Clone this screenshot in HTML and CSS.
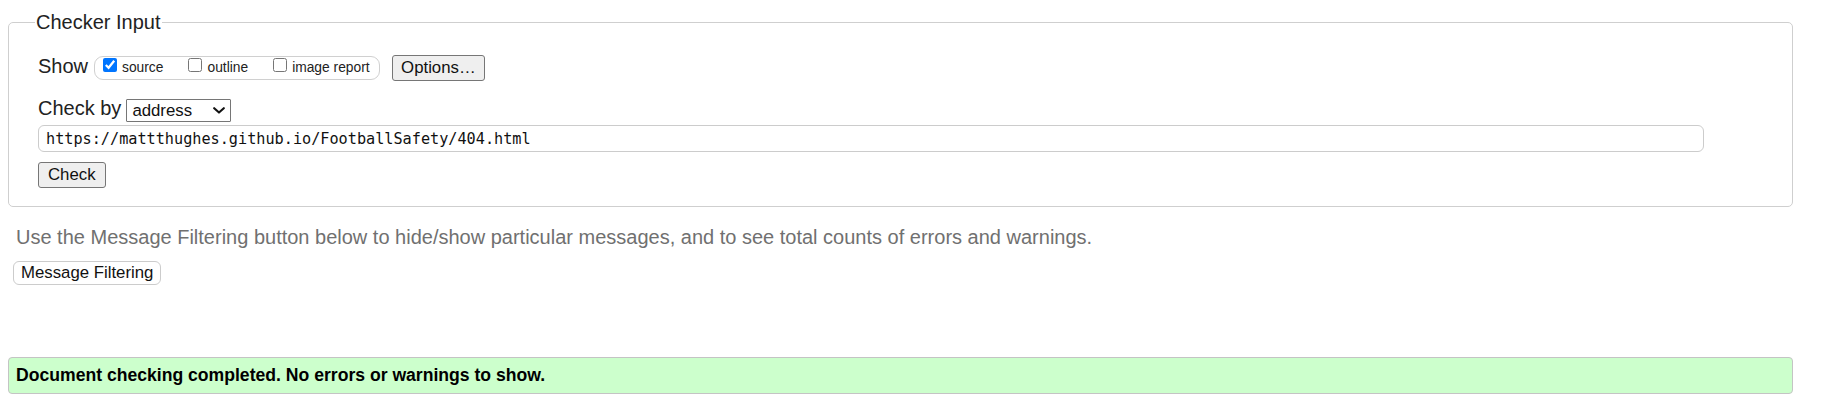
FILE: index.html
```html
<!DOCTYPE html>
<html lang="en">
<head>
<meta charset="utf-8">
<title>Nu Html Checker</title>
<link rel="stylesheet" href="styles.css">
</head>
<body>
<form class="page">
  <fieldset class="checker">
    <legend class="checker-legend">Checker Input</legend>
    <div class="show-row">
      <span class="row-label show-label">Show</span>
      <div class="options-group">
        <label class="opt"><input type="checkbox" class="cb" checked><span class="opt-text">source</span></label>
        <label class="opt"><input type="checkbox" class="cb"><span class="opt-text">outline</span></label>
        <label class="opt"><input type="checkbox" class="cb"><span class="opt-text">image report</span></label>
      </div>
      <button type="button" class="btn btn-options">Options…</button>
    </div>
    <div class="checkby-row">
      <span class="row-label checkby-label">Check by</span>
      <span class="select-wrap">
        <select class="select">
          <option>address</option>
        </select>
        <svg class="chevron" width="12" height="7" viewBox="0 0 12 7" aria-hidden="true"><path d="M1.2 1.2 L6 5.6 L10.8 1.2" fill="none" stroke="#111" stroke-width="2.1" stroke-linecap="round" stroke-linejoin="round"/></svg>
      </span>
    </div>
    <input class="url" type="url" value="https://mattthughes.github.io/FootballSafety/404.html">
    <div class="submit-row">
      <button type="button" class="btn btn-check">Check</button>
    </div>
  </fieldset>
  <p class="hint">Use the Message Filtering button below to hide/show particular messages, and to see total counts of errors and warnings.</p>
  <button type="button" class="btn-filter">Message Filtering</button>
  <div class="success">Document checking completed. No errors or warnings to show.</div>
</form>
</body>
</html>
```
FILE: styles.css
```css
html, body {
  margin: 0;
  padding: 0;
  background: #ffffff;
}
body {
  font-family: "Liberation Sans", Arial, sans-serif;
  color: #111;
}
.page {
  display: block;
  padding-top: 11px;
}
.checker {
  margin: 0 33px 0 8px;
  border: 1px solid #cfcfcf;
  border-radius: 5px;
  padding: 21px 88px 18px 29px;
  min-width: 0;
}
.checker-legend {
  font-size: 20px;
  line-height: 23px;
  padding: 0 1px;
  margin-left: -3px;
  color: #222;
}
.show-row {
  display: flex;
  align-items: flex-start;
  height: 26px;
}
.row-label {
  font-size: 20px;
  color: #222;
}
.show-label {
  line-height: 22px;
  margin-right: 6px;
}
.options-group {
  display: flex;
  align-items: flex-start;
  margin-top: 1px;
  height: 22px;
  border: 1px solid #d0d0d0;
  border-radius: 9px;
  padding: 0 9px 0 8px;
  gap: 25px;
}
.opt {
  display: flex;
  align-items: flex-start;
}
.cb {
  width: 14px;
  height: 14px;
  margin: 1px 5px 0 0;
  accent-color: #0075ff;
}
.opt-text {
  font-size: 13.8px;
  line-height: 16px;
  margin-top: 3px;
  color: #222;
}
.btn {
  font-family: "Liberation Sans", Arial, sans-serif;
  font-size: 16.8px;
  height: 26px;
  line-height: 20px;
  background: #efefef;
  border: 1px solid #767676;
  border-radius: 3px;
  color: #111;
  padding: 0 8px;
  margin: 0;
}
.btn-options {
  margin-left: 12px;
  padding: 0 8.5px;
}
.checkby-row {
  display: flex;
  align-items: flex-start;
  margin-top: 18px;
  height: 23px;
}
.checkby-label {
  line-height: 19px;
  margin-right: 5px;
}
.select-wrap {
  position: relative;
  display: block;
}
.select {
  appearance: none;
  -webkit-appearance: none;
  display: block;
  width: 105px;
  height: 23px;
  margin: 0;
  padding: 0 0 0 5px;
  border: 1px solid #767676;
  border-radius: 1px;
  background: #fff;
  font-family: "Liberation Sans", Arial, sans-serif;
  font-size: 16.8px;
  color: #111;
}
.chevron {
  position: absolute;
  left: 87px;
  top: 8px;
  pointer-events: none;
}
.url {
  display: block;
  box-sizing: border-box;
  width: 100%;
  height: 27px;
  margin: 3px 0 0 0;
  padding: 0 7px;
  border: 1px solid #cccccc;
  border-radius: 6px;
  font-family: "DejaVu Sans Mono", "Liberation Mono", monospace;
  font-size: 15.2px;
  color: #111;
  background: #fff;
}
.submit-row {
  margin-top: 10px;
  height: 26px;
}
.btn-check {
  padding: 0 9px;
}
.hint {
  margin: 19px 0 0 16px;
  font-size: 20px;
  line-height: 23px;
  color: #707070;
}
.btn-filter {
  display: block;
  margin: 12px 0 0 13px;
  height: 24px;
  padding: 0 7px;
  font-family: "Liberation Sans", Arial, sans-serif;
  font-size: 16.8px;
  line-height: 20px;
  background: #fff;
  border: 1px solid #cccccc;
  border-radius: 6px;
  color: #111;
}
.success {
  margin: 72px 33px 0 8px;
  padding: 7px 7px 8px 7px;
  background: #ccffcc;
  border: 1px solid #c4c4c4;
  border-radius: 4px;
  font-weight: bold;
  font-size: 17.6px;
  line-height: 20px;
  color: #000;
}
```
